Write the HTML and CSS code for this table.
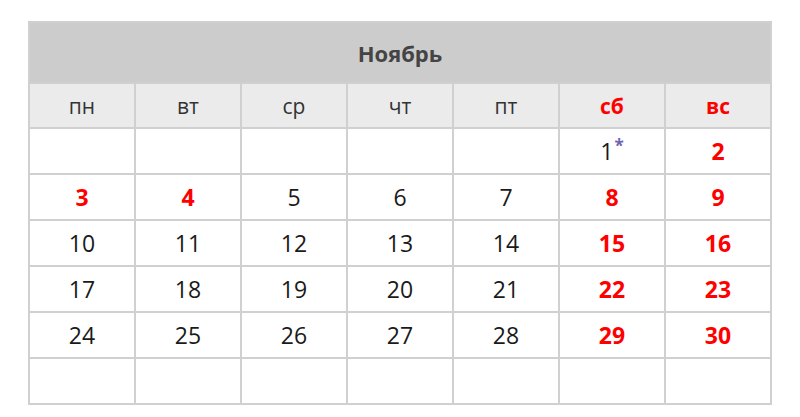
FILE: index.html
```html
<!DOCTYPE html>
<html lang="ru">
<head>
<meta charset="utf-8">
<title>Ноябрь</title>
<link rel="stylesheet" href="styles.css">
</head>
<body>
<table class="cal">
  <thead>
    <tr class="month-row"><th colspan="7" class="month">Ноябрь</th></tr>
    <tr class="wd-row">
      <th>пн</th><th>вт</th><th>ср</th><th>чт</th><th>пт</th><th class="we">сб</th><th class="we">вс</th>
    </tr>
  </thead>
  <tbody>
    <tr><td></td><td></td><td></td><td></td><td></td><td>1<sup class="mark">*</sup></td><td class="we">2</td></tr>
    <tr><td class="we">3</td><td class="we">4</td><td>5</td><td>6</td><td>7</td><td class="we">8</td><td class="we">9</td></tr>
    <tr><td>10</td><td>11</td><td>12</td><td>13</td><td>14</td><td class="we">15</td><td class="we">16</td></tr>
    <tr><td>17</td><td>18</td><td>19</td><td>20</td><td>21</td><td class="we">22</td><td class="we">23</td></tr>
    <tr><td>24</td><td>25</td><td>26</td><td>27</td><td>28</td><td class="we">29</td><td class="we">30</td></tr>
    <tr><td></td><td></td><td></td><td></td><td></td><td></td><td></td></tr>
  </tbody>
</table>
</body>
</html>
```
FILE: styles.css
```css
html, body {
  margin: 0;
  background: #ffffff;
}
body {
  padding: 21px 28px 0 28px;
  font-family: "Open Sans", "Noto Sans", sans-serif;
}
.cal {
  border-collapse: collapse;
  width: 744px;
  table-layout: fixed;
}
.cal th, .cal td {
  border: 2px solid #d0d0d0;
  text-align: center;
  padding: 0;
}
.month {
  background: #cccccc;
  border-color: #cccccc;
  height: 59px;
  font-size: 22px;
  font-weight: 700;
  color: #444444;
}
.wd-row th {
  background: #ebebeb;
  height: 43px;
  font-size: 21px;
  font-weight: 400;
  color: #333333;
}
.wd-row th.we {
  color: #ff0000;
  font-weight: 700;
}
.cal td {
  height: 44px;
  font-size: 23px;
  color: #1a1a1a;
}
.cal td.we {
  color: #ff0000;
  font-weight: 700;
}
.mark {
  color: #6f63b8;
  font-size: 17px;
  font-weight: 700;
  vertical-align: 8px;
  line-height: 0;
  margin-left: 1px;
}
```
